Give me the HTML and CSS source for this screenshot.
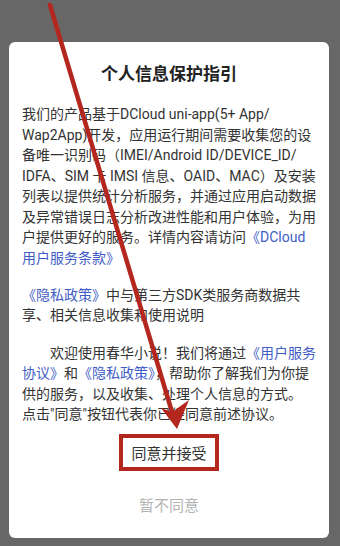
FILE: index.html
```html
<!DOCTYPE html>
<html lang="zh-CN">
<head>
<meta charset="utf-8">
<title>个人信息保护指引</title>
<link rel="stylesheet" href="styles.css">
</head>
<body>
<div class="dialog">
  <h1 class="title">个人信息保护指引</h1>
  <div class="content">
    <p class="para">我们的产品基于DCloud uni-app(5+ App/<wbr>Wap2App)开发，应用运行期间需要收集您的设备唯一识别码（IMEI/<wbr>Android ID/<wbr>DEVICE_ID/<wbr>IDFA、SIM 卡 IMSI 信息、OAID、MAC）及安装列表以提供统计分析服务，并通过应用启动数据及异常错误日志分析改进性能和用户体验，为用户提供更好的服务。详情内容请访问<span class="link">《DCloud用户服务条款》</span></p>
    <p class="para"><span class="link">《隐私政策》</span>中与第三方SDK类服务商数据共享、相关信息收集和使用说明</p>
    <p class="para indent">欢迎使用春华小说！我们将通过<span class="link">《用户服务协议》</span>和<span class="link">《隐私政策》</span>，帮助你了解我们为你提供的服务，以及收集、处理个人信息的方式。<br>点击"同意"按钮代表你已经同意前述协议。</p>
  </div>
  <div class="actions">
    <div class="accept"><span class="accept-label">同意并接受</span></div>
    <div class="decline">暂不同意</div>
  </div>
</div>
<svg class="arrow" width="340" height="546" viewBox="0 0 340 546">
  <line x1="50" y1="5" x2="172" y2="412" stroke="#b3271f" stroke-width="4.5" stroke-linecap="round"/>
  <polygon points="177,429 161,408 172,412 189,400" fill="#b3271f"/>
</svg>
</body>
</html>
```
FILE: styles.css
```css
html, body {
  margin: 0;
  padding: 0;
}
body {
  width: 340px;
  height: 546px;
  overflow: hidden;
  background: #676767;
  position: relative;
  font-family: Roboto, "Noto Sans CJK SC", sans-serif;
  color: #333;
}
.dialog {
  margin: 42px 0 0 9px;
  width: 320px;
  height: 496px;
  box-sizing: border-box;
  background: #fff;
  border-radius: 6px;
  padding: 20px 13px 0 13px;
}
.title {
  margin: 0;
  font-size: 17px;
  line-height: 24px;
  font-weight: bold;
  text-align: center;
  color: #222;
}
.content {
  margin-top: 18px;
  font-size: 14px;
  line-height: 20.5px;
}
.para {
  margin: 0 0 16.75px 0;
}
.para:last-child {
  margin-bottom: 0;
}
.indent {
  text-indent: 2em;
}
.link {
  color: #3f5cc6;
}
.actions {
  display: flex;
  flex-direction: column;
  align-items: center;
  margin-top: 9px;
}
.accept {
  border: 4px solid #b3271f;
  padding: 4px 8px 1px;
  font-size: 15px;
  line-height: 24px;
  color: #333;
}
.decline {
  margin-top: 23px;
  font-size: 15px;
  line-height: 24px;
  color: #b3b3b3;
}
.arrow {
  position: absolute;
  left: 0;
  top: 0;
  pointer-events: none;
}
```
